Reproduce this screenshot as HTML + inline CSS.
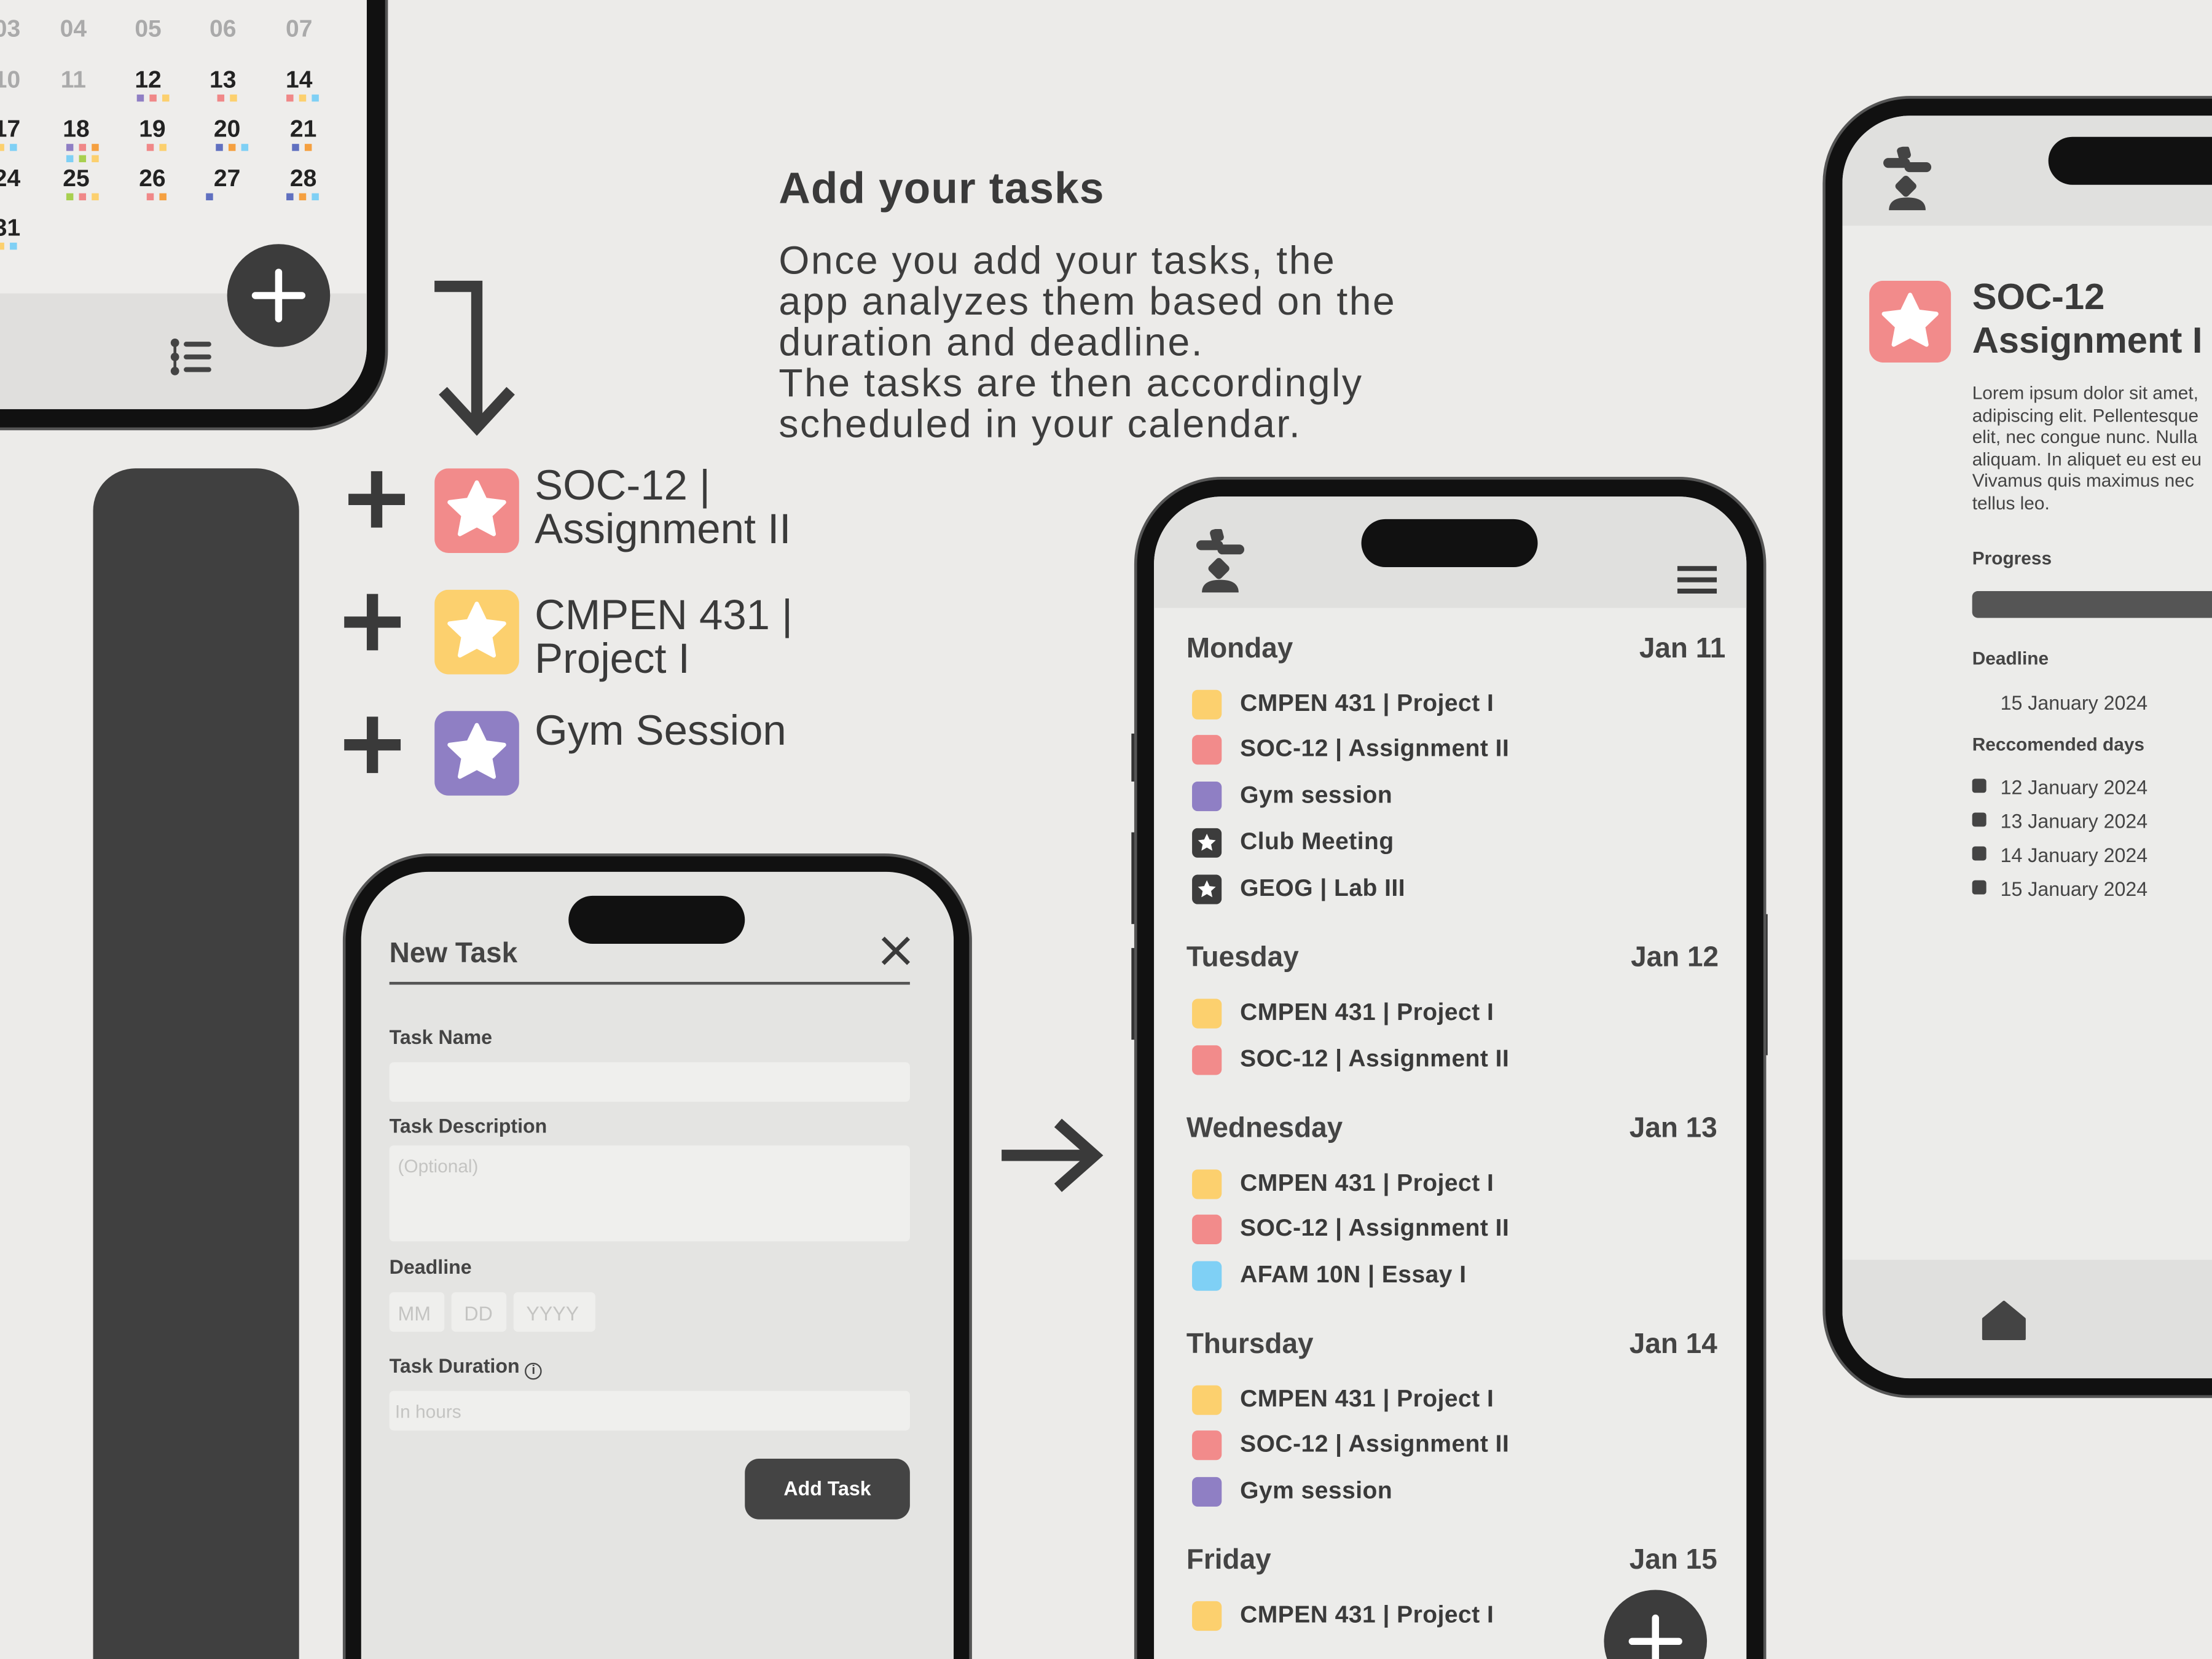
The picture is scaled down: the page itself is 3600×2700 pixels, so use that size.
<!DOCTYPE html>
<html><head><meta charset="utf-8"><style>
*{margin:0;padding:0;box-sizing:border-box}
html,body{width:3600px;height:2700px;overflow:hidden;background:#ecebe9}
#w{position:absolute;left:0;top:0;width:1568px;height:1176px;overflow:hidden;transform:scale(2.29592);transform-origin:0 0;font-family:"Liberation Sans",sans-serif;color:#3a3a3a}
.a{position:absolute}
.frame{position:absolute;background:#111;border:2px solid #555;border-radius:62px}
.scr{position:absolute;overflow:hidden;border-radius:48px}
.t{position:absolute;white-space:nowrap}
.sq{position:absolute;width:21px;height:21px;border-radius:4px}
.it{position:absolute;font-size:17px;font-weight:bold;color:#3a3a3a;letter-spacing:.2px}
.day{position:absolute;font-size:20px;font-weight:bold;color:#444}
.lbl{position:absolute;font-size:14px;font-weight:bold;color:#444}
.inp{position:absolute;background:#efefed;border-radius:3px;font-size:13px;color:#c4c4c2;padding:7px 6px}
.cal{position:absolute;font-size:17px;font-weight:bold;color:#222;width:40px;text-align:center}
.ds{position:absolute;width:30px;font-size:0;line-height:0;text-align:center}
.d{display:inline-block;width:5px;height:5px;margin:0 2px 3px}
</style></head><body><div id="w">

<!-- top-left phone -->
<div class="frame" style="left:-60px;top:-80px;width:335px;height:385px;border-radius:56px"></div>
<div class="scr" style="left:-50px;top:-70px;width:310px;height:360px;background:#eeedeb;border-radius:0 0 44px 0">
  <div class="a" style="left:0;top:278px;width:310px;height:82px;background:#e0dfdd"></div>
</div>
<div class="cal" style="left:-15px;top:11px;color:#aaa">03</div>
<div class="cal" style="left:32px;top:11px;color:#aaa">04</div>
<div class="cal" style="left:85px;top:11px;color:#aaa">05</div>
<div class="cal" style="left:138px;top:11px;color:#aaa">06</div>
<div class="cal" style="left:192px;top:11px;color:#aaa">07</div>
<div class="cal" style="left:-15px;top:47px;color:#aaa">10</div>
<div class="cal" style="left:32px;top:47px;color:#aaa">11</div>
<div class="cal" style="left:85px;top:47px">12</div>
<div class="cal" style="left:138px;top:47px">13</div>
<div class="cal" style="left:192px;top:47px">14</div>
<div class="cal" style="left:-15px;top:82px">17</div>
<div class="cal" style="left:34px;top:82px">18</div>
<div class="cal" style="left:88px;top:82px">19</div>
<div class="cal" style="left:141px;top:82px">20</div>
<div class="cal" style="left:195px;top:82px">21</div>
<div class="cal" style="left:-15px;top:117px">24</div>
<div class="cal" style="left:34px;top:117px">25</div>
<div class="cal" style="left:88px;top:117px">26</div>
<div class="cal" style="left:141px;top:117px">27</div>
<div class="cal" style="left:195px;top:117px">28</div>
<div class="cal" style="left:-15px;top:152px">31</div>

<div class="ds" style="left:93px;top:67px"><i class="d" style="background:#8f7fc4"></i><i class="d" style="background:#f08888"></i><i class="d" style="background:#fcd06e"></i></div>
<div class="ds" style="left:146px;top:67px"><i class="d" style="background:#f08888"></i><i class="d" style="background:#fcd06e"></i></div>
<div class="ds" style="left:199px;top:67px"><i class="d" style="background:#f08888"></i><i class="d" style="background:#fcd06e"></i><i class="d" style="background:#7fd0f5"></i></div>
<div class="ds" style="left:-10px;top:102px"><i class="d" style="background:#fcd06e"></i><i class="d" style="background:#7fd0f5"></i></div>
<div class="ds" style="left:43px;top:102px"><i class="d" style="background:#8f7fc4"></i><i class="d" style="background:#f08888"></i><i class="d" style="background:#f5a040"></i><i class="d" style="background:#7fd0f5"></i><i class="d" style="background:#a8d050"></i><i class="d" style="background:#fcd06e"></i></div>
<div class="ds" style="left:96px;top:102px"><i class="d" style="background:#f08888"></i><i class="d" style="background:#fcd06e"></i></div>
<div class="ds" style="left:149px;top:102px"><i class="d" style="background:#6070c0"></i><i class="d" style="background:#f5a040"></i><i class="d" style="background:#7fd0f5"></i></div>
<div class="ds" style="left:199px;top:102px"><i class="d" style="background:#6070c0"></i><i class="d" style="background:#f5a040"></i></div>
<div class="ds" style="left:43px;top:137px"><i class="d" style="background:#a8d050"></i><i class="d" style="background:#f08888"></i><i class="d" style="background:#fcd06e"></i></div>
<div class="ds" style="left:96px;top:137px"><i class="d" style="background:#f08888"></i><i class="d" style="background:#f5a040"></i></div>
<div class="ds" style="left:143px;top:137px;width:10px"><i class="d" style="background:#6070c0"></i></div>
<div class="ds" style="left:199px;top:137px"><i class="d" style="background:#6070c0"></i><i class="d" style="background:#f5a040"></i><i class="d" style="background:#7fd0f5"></i></div>
<div class="ds" style="left:-10px;top:172px"><i class="d" style="background:#fcd06e"></i><i class="d" style="background:#7fd0f5"></i></div>

<div class="a" style="left:161px;top:173px;width:73px;height:73px;border-radius:50%;background:#3c3c3c"></div>
<svg class="a" style="left:161px;top:173px" width="73" height="73"><path d="M36.5 20V53M20 36.5H53" stroke="#fff" stroke-width="5" stroke-linecap="round"/></svg>
<svg class="a" style="left:120px;top:240px" width="32" height="28"><g fill="#444"><circle cx="4" cy="3" r="3"/><circle cx="4" cy="13" r="3"/><circle cx="4" cy="23" r="3"/></g><path d="M4 3V23" stroke="#444" stroke-width="2"/><path d="M12 4H28M12 13H28M12 22H28" stroke="#444" stroke-width="3.5" stroke-linecap="round"/></svg>

<!-- dark pillar -->
<div class="a" style="left:66px;top:332px;width:146px;height:900px;background:#404040;border-radius:30px"></div>

<!-- down arrow -->
<svg class="a" style="left:300px;top:195px" width="70" height="120"><path d="M8 8H38V108" fill="none" stroke="#3c3c3c" stroke-width="8"/><path d="M14 82L38 108L62 82" fill="none" stroke="#3c3c3c" stroke-width="8"/></svg>

<!-- task list -->
<svg class="a" style="left:245px;top:332px" width="44" height="44"><path d="M22 2V42M2 22H42" stroke="#3a3a3a" stroke-width="8"/></svg>
<svg class="a" style="left:242px;top:419px" width="44" height="44"><path d="M22 2V42M2 22H42" stroke="#3a3a3a" stroke-width="8"/></svg>
<svg class="a" style="left:242px;top:506px" width="44" height="44"><path d="M22 2V42M2 22H42" stroke="#3a3a3a" stroke-width="8"/></svg>
<svg class="a" style="left:308px;top:332px" width="60" height="60"><rect width="60" height="60" rx="10" fill="#f28b8b"/><path d="M30 10L35.9 22.3 49.3 24 39.5 33.3 42 46.6 30 40.2 18 46.6 20.5 33.3 10.7 24 24.1 22.3Z" fill="#fff" stroke="#fff" stroke-width="3" stroke-linejoin="round"/></svg>
<svg class="a" style="left:308px;top:418px" width="60" height="60"><rect width="60" height="60" rx="10" fill="#fcd06e"/><path d="M30 10L35.9 22.3 49.3 24 39.5 33.3 42 46.6 30 40.2 18 46.6 20.5 33.3 10.7 24 24.1 22.3Z" fill="#fff" stroke="#fff" stroke-width="3" stroke-linejoin="round"/></svg>
<svg class="a" style="left:308px;top:504px" width="60" height="60"><rect width="60" height="60" rx="10" fill="#8f7fc4"/><path d="M30 10L35.9 22.3 49.3 24 39.5 33.3 42 46.6 30 40.2 18 46.6 20.5 33.3 10.7 24 24.1 22.3Z" fill="#fff" stroke="#fff" stroke-width="3" stroke-linejoin="round"/></svg>
<div class="t" style="left:379px;top:329px;font-size:30px;line-height:31px;color:#3a3a3a">SOC-12 |<br>Assignment II</div>
<div class="t" style="left:379px;top:421px;font-size:30px;line-height:31px;color:#3a3a3a">CMPEN 431 |<br>Project I</div>
<div class="t" style="left:379px;top:503px;font-size:30px;line-height:31px;color:#3a3a3a">Gym Session</div>

<!-- heading -->
<div class="t" style="left:552px;top:116px;font-size:31px;font-weight:bold;color:#3a3a3a;letter-spacing:.5px">Add your tasks</div>
<div class="t" style="left:552px;top:170px;font-size:28px;line-height:29px;color:#3d3d3d;letter-spacing:1.1px">Once you add your tasks, the<br>app analyzes them based on the<br>duration and deadline.<br>The tasks are then accordingly<br>scheduled in your calendar.</div>

<!-- New Task phone -->
<div class="frame" style="left:243px;top:605px;width:446px;height:640px"></div>
<div class="scr" style="left:256px;top:618px;width:420px;height:620px;background:#e4e4e2"></div>
<div class="a" style="left:403px;top:635px;width:125px;height:34px;border-radius:17px;background:#111"></div>
<div class="t" style="left:276px;top:665px;font-size:20px;font-weight:bold;color:#444">New Task</div>
<svg class="a" style="left:624px;top:663px" width="22" height="22"><path d="M2 2L20 20M20 2L2 20" stroke="#3a3a3a" stroke-width="3"/></svg>
<div class="a" style="left:276px;top:696px;width:369px;height:1.5px;background:#555"></div>
<div class="lbl" style="left:276px;top:727px">Task Name</div>
<div class="inp" style="left:276px;top:753px;width:369px;height:28px"></div>
<div class="lbl" style="left:276px;top:790px">Task Description</div>
<div class="inp" style="left:276px;top:812px;width:369px;height:68px">(Optional)</div>
<div class="lbl" style="left:276px;top:890px">Deadline</div>
<div class="inp" style="left:276px;top:916px;width:39px;height:28px;font-size:14px">MM</div>
<div class="inp" style="left:320px;top:916px;width:39px;height:28px;font-size:14px;padding-left:9px">DD</div>
<div class="inp" style="left:364px;top:916px;width:58px;height:28px;font-size:14px;padding-left:9px">YYYY</div>
<div class="lbl" style="left:276px;top:960px">Task Duration <span style="display:inline-block;width:12px;height:12px;border:1.5px solid #444;border-radius:50%;font-size:9px;text-align:center;line-height:9px;vertical-align:-1px">i</span></div>
<div class="inp" style="left:276px;top:986px;width:369px;height:28px;padding-left:4px">In hours</div>
<div class="a" style="left:528px;top:1034px;width:117px;height:43px;background:#444;border-radius:10px;color:#fff;font-size:14px;font-weight:bold;text-align:center;line-height:43px">Add Task</div>

<!-- right arrow -->
<svg class="a" style="left:708px;top:792px" width="76" height="54"><path d="M2 27H68" stroke="#3a3a3a" stroke-width="8"/><path d="M42 4L68 27L42 50" fill="none" stroke="#3a3a3a" stroke-width="8"/></svg>

<!-- schedule phone -->
<div class="a" style="left:802px;top:520px;width:4px;height:34px;background:#333"></div>
<div class="a" style="left:802px;top:590px;width:4px;height:65px;background:#333"></div>
<div class="a" style="left:802px;top:672px;width:4px;height:65px;background:#333"></div>
<div class="a" style="left:1249px;top:648px;width:4px;height:100px;background:#333"></div>
<div class="frame" style="left:804px;top:338px;width:448px;height:900px"></div>
<div class="scr" style="left:818px;top:352px;width:420px;height:880px;background:#ececea">
  <div class="a" style="left:0;top:0;width:420px;height:79px;background:#e0e0de"></div>
</div>
<div class="a" style="left:965px;top:368px;width:125px;height:34px;border-radius:17px;background:#111"></div>
<svg class="a" style="left:846px;top:375px" width="40" height="48" viewBox="0 0 40 48"><g fill="#444"><rect x="12" y="0" width="9" height="9" rx="2.5" transform="rotate(-15 16 4)"/><rect x="2" y="8" width="19" height="7" rx="3.5"/><rect x="17" y="11" width="19" height="7" rx="3.5"/><rect x="12" y="22" width="12" height="12" rx="2.5" transform="rotate(45 18 28)"/><path d="M6 45Q6 36 19 36Q32 36 32 45Z"/></g></svg>
<svg class="a" style="left:1189px;top:401px" width="28" height="20"><path d="M0 2H28M0 10H28M0 18H28" stroke="#3a3a3a" stroke-width="3.5"/></svg>

<div class="day" style="left:841px;top:449px">Monday</div><div class="day" style="left:1162px;top:449px">Jan 11</div>
<div class="sq" style="left:845px;top:489px;background:#fcd06e"></div><div class="it" style="left:879px;top:489px">CMPEN 431 | Project I</div>
<div class="sq" style="left:845px;top:521px;background:#f28b8b"></div><div class="it" style="left:879px;top:521px">SOC-12 | Assignment II</div>
<div class="sq" style="left:845px;top:554px;background:#8f7fc4"></div><div class="it" style="left:879px;top:554px">Gym session</div>
<svg class="a" style="left:845px;top:587px" width="21" height="21"><rect width="21" height="21" rx="4" fill="#3c3c3c"/><path d="M10.5 4L12.4 8.1 16.8 8.6 13.5 11.6 14.4 16 10.5 13.8 6.6 16 7.5 11.6 4.2 8.6 8.6 8.1Z" fill="#fff"/></svg><div class="it" style="left:879px;top:587px">Club Meeting</div>
<svg class="a" style="left:845px;top:620px" width="21" height="21"><rect width="21" height="21" rx="4" fill="#3c3c3c"/><path d="M10.5 4L12.4 8.1 16.8 8.6 13.5 11.6 14.4 16 10.5 13.8 6.6 16 7.5 11.6 4.2 8.6 8.6 8.1Z" fill="#fff"/></svg><div class="it" style="left:879px;top:620px">GEOG | Lab III</div>

<div class="day" style="left:841px;top:668px">Tuesday</div><div class="day" style="left:1156px;top:668px">Jan 12</div>
<div class="sq" style="left:845px;top:708px;background:#fcd06e"></div><div class="it" style="left:879px;top:708px">CMPEN 431 | Project I</div>
<div class="sq" style="left:845px;top:741px;background:#f28b8b"></div><div class="it" style="left:879px;top:741px">SOC-12 | Assignment II</div>

<div class="day" style="left:841px;top:789px">Wednesday</div><div class="day" style="left:1155px;top:789px">Jan 13</div>
<div class="sq" style="left:845px;top:829px;background:#fcd06e"></div><div class="it" style="left:879px;top:829px">CMPEN 431 | Project I</div>
<div class="sq" style="left:845px;top:861px;background:#f28b8b"></div><div class="it" style="left:879px;top:861px">SOC-12 | Assignment II</div>
<div class="sq" style="left:845px;top:894px;background:#7fd0f5"></div><div class="it" style="left:879px;top:894px">AFAM 10N | Essay I</div>

<div class="day" style="left:841px;top:942px">Thursday</div><div class="day" style="left:1155px;top:942px">Jan 14</div>
<div class="sq" style="left:845px;top:982px;background:#fcd06e"></div><div class="it" style="left:879px;top:982px">CMPEN 431 | Project I</div>
<div class="sq" style="left:845px;top:1014px;background:#f28b8b"></div><div class="it" style="left:879px;top:1014px">SOC-12 | Assignment II</div>
<div class="sq" style="left:845px;top:1047px;background:#8f7fc4"></div><div class="it" style="left:879px;top:1047px">Gym session</div>

<div class="day" style="left:841px;top:1095px">Friday</div><div class="day" style="left:1155px;top:1095px">Jan 15</div>
<div class="sq" style="left:845px;top:1135px;background:#fcd06e"></div><div class="it" style="left:879px;top:1135px">CMPEN 431 | Project I</div>
<div class="a" style="left:1137px;top:1127px;width:73px;height:73px;border-radius:50%;background:#3c3c3c"></div>
<svg class="a" style="left:1137px;top:1127px" width="73" height="73"><path d="M36.5 20V53M20 36.5H53" stroke="#fff" stroke-width="5" stroke-linecap="round"/></svg>

<!-- right detail phone -->
<div class="frame" style="left:1292px;top:68px;width:400px;height:923px"></div>
<div class="scr" style="left:1306px;top:82px;width:380px;height:895px;background:#ececea;border-radius:48px 0 0 48px">
  <div class="a" style="left:0;top:0;width:380px;height:78px;background:#e0e0de"></div>
  <div class="a" style="left:0;top:811px;width:380px;height:84px;background:#e0e0de"></div>
</div>
<div class="a" style="left:1452px;top:97px;width:160px;height:34px;border-radius:17px;background:#111"></div>
<svg class="a" style="left:1333px;top:104px" width="40" height="48" viewBox="0 0 40 48"><g fill="#444"><rect x="12" y="0" width="9" height="9" rx="2.5" transform="rotate(-15 16 4)"/><rect x="2" y="8" width="19" height="7" rx="3.5"/><rect x="17" y="11" width="19" height="7" rx="3.5"/><rect x="12" y="22" width="12" height="12" rx="2.5" transform="rotate(45 18 28)"/><path d="M6 45Q6 36 19 36Q32 36 32 45Z"/></g></svg>
<svg class="a" style="left:1325px;top:199px" width="58" height="58"><rect width="58" height="58" rx="10" fill="#f28b8b"/><path d="M29 10L34.7 21.9 47.6 23.5 38.2 32.5 40.6 45.3 29 39.1 17.4 45.3 19.8 32.5 10.4 23.5 23.3 21.9Z" fill="#fff" stroke="#fff" stroke-width="3" stroke-linejoin="round"/></svg>
<div class="t" style="left:1398px;top:195px;font-size:26px;line-height:31px;font-weight:bold;color:#3a3a3a">SOC-12<br>Assignment I</div>
<div class="t" style="left:1398px;top:271px;font-size:13px;line-height:15.5px;color:#444">Lorem ipsum dolor sit amet,<br>adipiscing elit. Pellentesque<br>elit, nec congue nunc. Nulla<br>aliquam. In aliquet eu est eu<br>Vivamus quis maximus nec<br>tellus leo.</div>
<div class="lbl" style="left:1398px;top:388px;font-size:13px">Progress</div>
<div class="a" style="left:1398px;top:419px;width:200px;height:19px;border-radius:4px;background:#555"></div>
<div class="lbl" style="left:1398px;top:459px;font-size:13px">Deadline</div>
<div class="t" style="left:1418px;top:490px;font-size:14px;color:#444">15 January 2024</div>
<div class="lbl" style="left:1398px;top:520px;font-size:13px">Reccomended days</div>
<div class="a" style="left:1398px;top:552px;width:10px;height:10px;border-radius:2px;background:#444"></div><div class="t" style="left:1418px;top:550px;font-size:14px;color:#444">12 January 2024</div>
<div class="a" style="left:1398px;top:576px;width:10px;height:10px;border-radius:2px;background:#444"></div><div class="t" style="left:1418px;top:574px;font-size:14px;color:#444">13 January 2024</div>
<div class="a" style="left:1398px;top:600px;width:10px;height:10px;border-radius:2px;background:#444"></div><div class="t" style="left:1418px;top:598px;font-size:14px;color:#444">14 January 2024</div>
<div class="a" style="left:1398px;top:624px;width:10px;height:10px;border-radius:2px;background:#444"></div><div class="t" style="left:1418px;top:622px;font-size:14px;color:#444">15 January 2024</div>
<svg class="a" style="left:1405px;top:922px" width="31" height="28"><path d="M15.5 1L30 13V27H1V13Z" fill="#444" stroke="#444" stroke-width="2" stroke-linejoin="round"/></svg>

</div></body></html>
